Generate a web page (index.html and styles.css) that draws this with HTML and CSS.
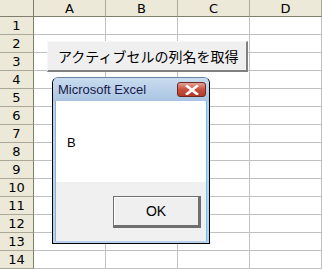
FILE: index.html
```html
<!DOCTYPE html>
<html lang="ja">
<head>
    <meta charset="UTF-8">
    <title>Excel - 列名</title>
    <link rel="stylesheet" href="styles.css">
</head>
<body>
    <div class="sheet">
        <div class="corner"></div>
        <div class="col-head">A</div>
        <div class="col-head">B</div>
        <div class="col-head">C</div>
        <div class="col-head">D</div>

        <div class="row-head">1</div><div class="cell"></div><div class="cell"></div><div class="cell"></div><div class="cell"></div>
        <div class="row-head">2</div><div class="cell"></div><div class="cell"></div><div class="cell"></div><div class="cell"></div>
        <div class="row-head">3</div><div class="cell"></div><div class="cell"></div><div class="cell"></div><div class="cell"></div>
        <div class="row-head">4</div><div class="cell"></div><div class="cell"></div><div class="cell"></div><div class="cell"></div>
        <div class="row-head">5</div><div class="cell"></div><div class="cell"></div><div class="cell"></div><div class="cell"></div>
        <div class="row-head">6</div><div class="cell"></div><div class="cell"></div><div class="cell"></div><div class="cell"></div>
        <div class="row-head">7</div><div class="cell"></div><div class="cell"></div><div class="cell"></div><div class="cell"></div>
        <div class="row-head">8</div><div class="cell"></div><div class="cell"></div><div class="cell"></div><div class="cell"></div>
        <div class="row-head">9</div><div class="cell"></div><div class="cell"></div><div class="cell"></div><div class="cell"></div>
        <div class="row-head">10</div><div class="cell"></div><div class="cell"></div><div class="cell"></div><div class="cell"></div>
        <div class="row-head">11</div><div class="cell"></div><div class="cell"></div><div class="cell"></div><div class="cell"></div>
        <div class="row-head">12</div><div class="cell"></div><div class="cell"></div><div class="cell"></div><div class="cell"></div>
        <div class="row-head">13</div><div class="cell"></div><div class="cell"></div><div class="cell"></div><div class="cell"></div>
        <div class="row-head">14</div><div class="cell"></div><div class="cell"></div><div class="cell"></div><div class="cell"></div>

        <button class="sheet-button">アクティブセルの列名を取得</button>

        <div class="msgbox">
            <div class="msgbox-title">
                <span>Microsoft Excel</span>
                <span class="close-btn">
                    <svg width="14" height="10" viewBox="0 0 14 10">
                        <path d="M2 1 L12 9 M12 1 L2 9" stroke="#fff" stroke-width="2.6" stroke-linecap="square"/>
                    </svg>
                </span>
            </div>
            <div class="msgbox-body">B</div>
            <div class="msgbox-foot">
                <button class="ok-btn">OK</button>
            </div>
        </div>
    </div>
</body>
</html>
```

FILE: styles.css
```css
body {
    margin: 0;
    background: #ffffff;
    font-family: "Liberation Sans", "Noto Sans CJK JP", sans-serif;
    overflow: hidden;
}
.sheet {
    position: relative;
    display: grid;
    grid-template-columns: 34px repeat(4, 72px);
    grid-template-rows: 17px repeat(14, 18px);
    width: 322px;
}
.corner, .col-head, .row-head {
    background: #ece9d8;
    box-sizing: border-box;
    border-right: 1px solid #aca899;
    border-bottom: 1px solid #aca899;
    font-family: "DejaVu Sans", sans-serif;
    font-size: 13px;
    color: #000;
    display: flex;
    align-items: center;
    justify-content: center;
}
.corner, .col-head {
    border-bottom: 1px solid #7f7d6e;
}
.corner, .row-head {
    border-right: 1px solid #7f7d6e;
}
.cell {
    box-sizing: border-box;
    border-right: 1px solid #c0c0c0;
    border-bottom: 1px solid #c0c0c0;
}
.sheet-button {
    position: absolute;
    left: 47px;
    top: 41px;
    width: 201px;
    height: 31px;
    box-sizing: border-box;
    background: #efefef;
    border: 1px solid #f7f7f7;
    border-right: 2px solid #808080;
    border-bottom: 2px solid #808080;
    font-family: "Noto Sans CJK JP", sans-serif;
    font-size: 14px;
    color: #000;
    text-align: left;
    padding: 0 0 0 10px;
}
.msgbox {
    position: absolute;
    left: 52px;
    top: 77px;
    width: 158px;
    height: 167px;
    box-sizing: border-box;
    border: 1px solid #000;
    border-top-color: #6a86a6;
    border-radius: 6px 6px 0 0;
    background: #b9d1ea;
    padding: 0 2px 2px 2px;
    display: flex;
    flex-direction: column;
}
.msgbox-title {
    height: 23px;
    display: flex;
    align-items: center;
    justify-content: space-between;
    padding: 0 3px 0 5px;
    background: linear-gradient(180deg, #c9dcef, #a9c4e2);
    border-radius: 5px 5px 0 0;
    margin: 0 -2px;
    font-size: 13px;
    color: #1a1a4a;
}
.close-btn {
    width: 29px;
    height: 15px;
    box-sizing: border-box;
    border: 1px solid #6e2a1f;
    border-radius: 3px;
    background: linear-gradient(180deg, #e7a096, #c6503f 50%, #b63a28);
    display: flex;
    align-items: center;
    justify-content: center;
}
.msgbox-body {
    background: #fff;
    height: 81px;
    box-sizing: border-box;
    padding: 34px 0 0 11px;
    font-size: 13px;
    color: #000;
    border-left: 1px solid #86b5e0;
    border-right: 1px solid #5cc7ef;
}
.msgbox-foot {
    flex: 1;
    background: #f0f0f0;
    padding: 14px 0 0 57px;
    border-left: 1px solid #86b5e0;
    border-right: 1px solid #5cc7ef;
}
.ok-btn {
    width: 88px;
    height: 32px;
    box-sizing: border-box;
    background: #efefef;
    border: 1px solid #6f6f6f;
    border-right-width: 3px;
    border-bottom-width: 3px;
    box-shadow: inset 1px 1px 0 #fff;
    font-family: "Liberation Sans", sans-serif;
    font-size: 14px;
    color: #000;
    padding: 0;
}
```
